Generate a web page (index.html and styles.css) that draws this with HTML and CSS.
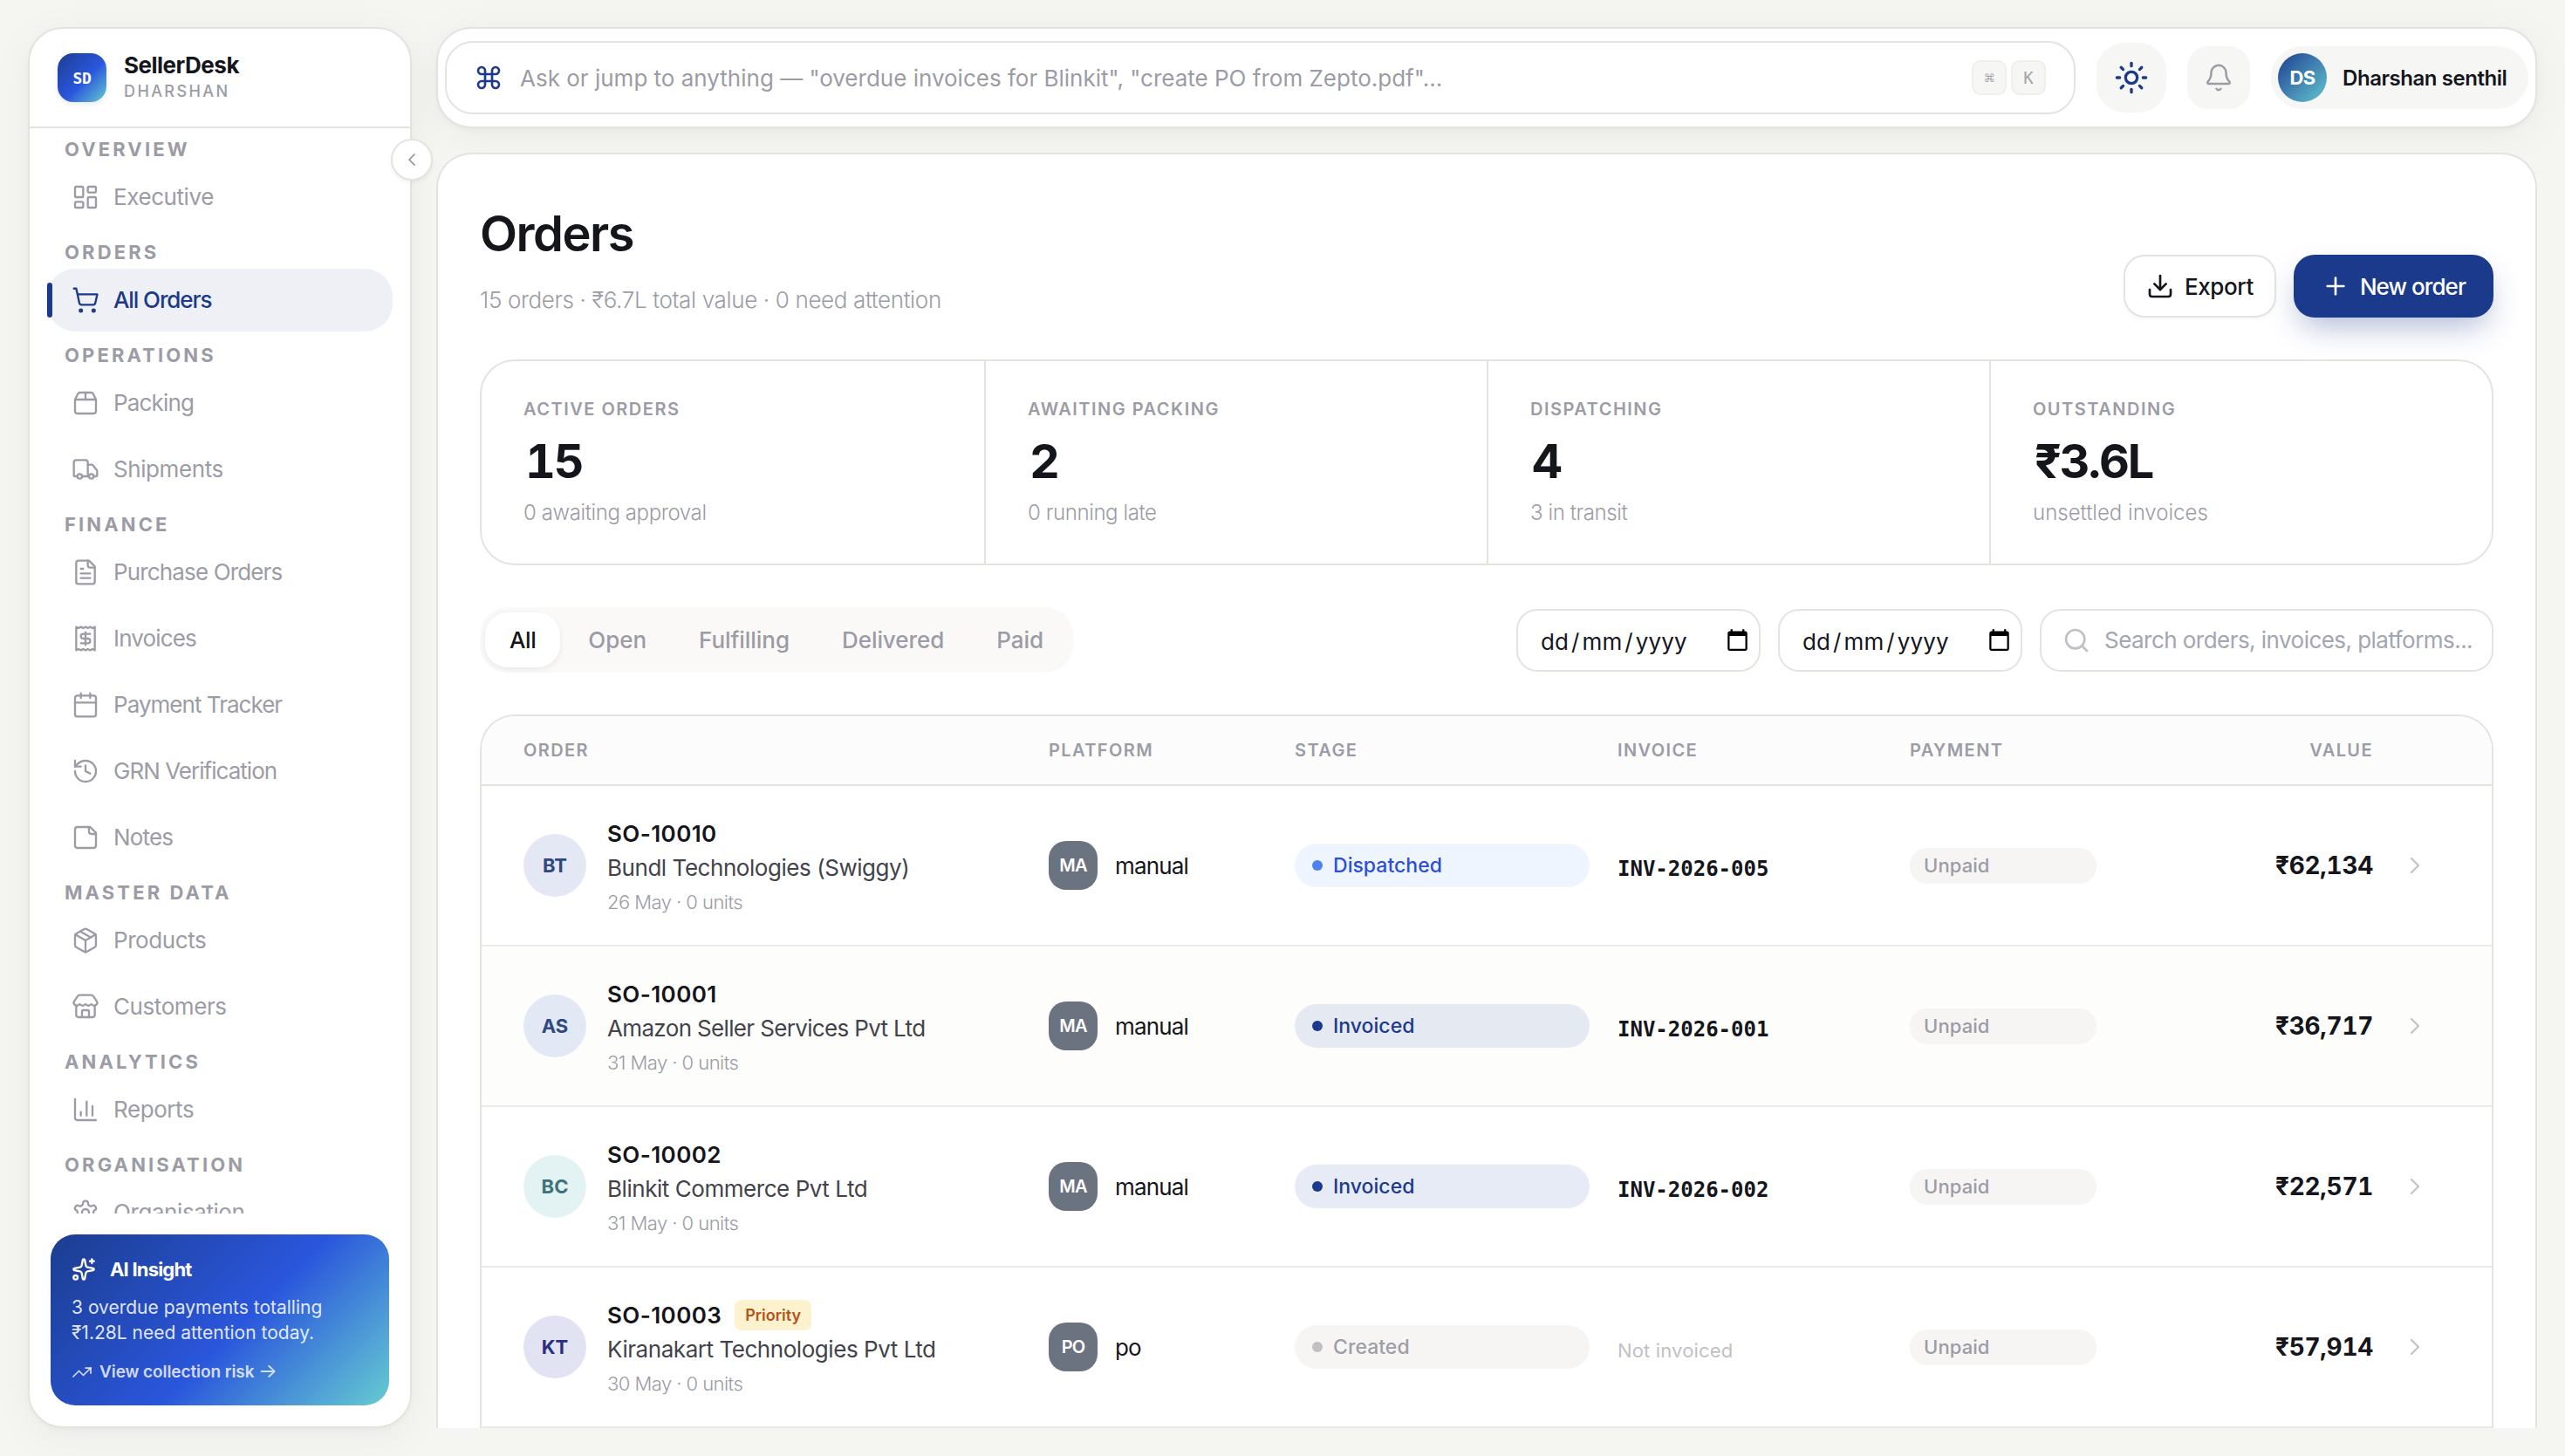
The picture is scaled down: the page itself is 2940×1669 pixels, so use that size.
FILE: index.html
```html
<!DOCTYPE html>
<html lang="en">
<head>
<meta charset="utf-8">
<title>Orders · SellerDesk</title>
<link rel="stylesheet" href="styles.css">
</head>
<body>
<div class="app">
  <aside class="sidebar">
    <header class="brand">
      <div class="brand-logo">SD</div>
      <div>
        <div class="brand-name">SellerDesk</div>
        <div class="brand-org">DHARSHAN</div>
      </div>
    </header>
    <button class="collapse"><svg class="icon" viewBox="0 0 24 24"><path d="m15 18-6-6 6-6"/></svg></button>
    <nav class="nav">
      <section>
        <h2>OVERVIEW</h2>
        <a class="nav-item"><svg class="icon" viewBox="0 0 24 24"><rect width="7" height="9" x="3" y="3" rx="1"/><rect width="7" height="5" x="14" y="3" rx="1"/><rect width="7" height="9" x="14" y="12" rx="1"/><rect width="7" height="5" x="3" y="16" rx="1"/></svg><span class="t-exec">Executive</span></a>
      </section>
      <section>
        <h2>ORDERS</h2>
        <a class="nav-item active"><svg class="icon" viewBox="0 0 24 24"><circle cx="8" cy="21" r="1"/><circle cx="19" cy="21" r="1"/><path d="M2.05 2.05h2l2.66 12.42a2 2 0 0 0 2 1.58h9.78a2 2 0 0 0 1.95-1.57l1.65-7.43H5.12"/></svg><span>All Orders</span></a>
      </section>
      <section>
        <h2>OPERATIONS</h2>
        <a class="nav-item"><svg class="icon" viewBox="0 0 24 24"><path d="M12 3v6"/><path d="M16.76 3a2 2 0 0 1 1.8 1.1l2.23 4.479a2 2 0 0 1 .21.891V19a2 2 0 0 1-2 2H5a2 2 0 0 1-2-2V9.472a2 2 0 0 1 .211-.894L5.45 4.1A2 2 0 0 1 7.24 3z"/><path d="M3.054 9.013h17.893"/></svg><span>Packing</span></a>
        <a class="nav-item"><svg class="icon" viewBox="0 0 24 24"><path d="M14 18V6a2 2 0 0 0-2-2H4a2 2 0 0 0-2 2v11a1 1 0 0 0 1 1h2"/><path d="M15 18H9"/><path d="M19 18h2a1 1 0 0 0 1-1v-3.65a1 1 0 0 0-.22-.624l-3.48-4.35A1 1 0 0 0 17.52 8H14"/><circle cx="17" cy="18" r="2"/><circle cx="7" cy="18" r="2"/></svg><span class="t-exec">Shipments</span></a>
      </section>
      <section>
        <h2>FINANCE</h2>
        <a class="nav-item"><svg class="icon" viewBox="0 0 24 24"><path d="M15 2H6a2 2 0 0 0-2 2v16a2 2 0 0 0 2 2h12a2 2 0 0 0 2-2V7Z"/><path d="M14 2v4a2 2 0 0 0 2 2h4"/><path d="M10 9H8"/><path d="M16 13H8"/><path d="M16 17H8"/></svg><span>Purchase Orders</span></a>
        <a class="nav-item"><svg class="icon" viewBox="0 0 24 24"><path d="M4 2v20l2-1 2 1 2-1 2 1 2-1 2 1 2-1 2 1V2l-2 1-2-1-2 1-2-1-2 1-2-1-2 1Z"/><path d="M16 8h-6a2 2 0 1 0 0 4h4a2 2 0 1 1 0 4H8"/><path d="M12 17.5v-11"/></svg><span>Invoices</span></a>
        <a class="nav-item"><svg class="icon" viewBox="0 0 24 24"><path d="M8 2v4"/><path d="M16 2v4"/><rect width="18" height="18" x="3" y="4" rx="2"/><path d="M3 10h18"/></svg><span class="t-tight">Payment Tracker</span></a>
        <a class="nav-item"><svg class="icon" viewBox="0 0 24 24"><path d="M3 12a9 9 0 1 0 9-9 9.75 9.75 0 0 0-6.74 2.74L3 8"/><path d="M3 3v5h5"/><path d="M12 7v5l4 2"/></svg><span class="t-tight">GRN Verification</span></a>
        <a class="nav-item"><svg class="icon" viewBox="0 0 24 24"><path d="M16 3H5a2 2 0 0 0-2 2v14a2 2 0 0 0 2 2h14a2 2 0 0 0 2-2V8Z"/><path d="M15 3v4a2 2 0 0 0 2 2h4"/></svg><span>Notes</span></a>
      </section>
      <section>
        <h2>MASTER DATA</h2>
        <a class="nav-item"><svg class="icon" viewBox="0 0 24 24"><path d="M11 21.73a2 2 0 0 0 2 0l7-4A2 2 0 0 0 21 16V8a2 2 0 0 0-1-1.73l-7-4a2 2 0 0 0-2 0l-7 4A2 2 0 0 0 3 8v8a2 2 0 0 0 1 1.73z"/><path d="M12 22V12"/><path d="M3.29 7 12 12l8.71-5"/><path d="m7.5 4.27 9 5.15"/></svg><span class="t-exec">Products</span></a>
        <a class="nav-item"><svg class="icon" viewBox="0 0 24 24"><path d="M15 21v-5a1 1 0 0 0-1-1h-4a1 1 0 0 0-1 1v5"/><path d="M17.774 10.31a1.12 1.12 0 0 0-1.549 0 2.5 2.5 0 0 1-3.451 0 1.12 1.12 0 0 0-1.548 0 2.5 2.5 0 0 1-3.452 0 1.12 1.12 0 0 0-1.549 0 2.5 2.5 0 0 1-3.77-3.248l2.889-4.184A2 2 0 0 1 7 2h10a2 2 0 0 1 1.653.873l2.895 4.192a2.5 2.5 0 0 1-3.774 3.244"/><path d="M4 10.95V19a2 2 0 0 0 2 2h12a2 2 0 0 0 2-2v-8.05"/></svg><span class="t-exec">Customers</span></a>
      </section>
      <section>
        <h2>ANALYTICS</h2>
        <a class="nav-item"><svg class="icon" viewBox="0 0 24 24"><path d="M3 3v16a2 2 0 0 0 2 2h16"/><path d="M18 17V9"/><path d="M13 17V5"/><path d="M8 17v-3"/></svg><span class="t-exec">Reports</span></a>
      </section>
      <section>
        <h2>ORGANISATION</h2>
        <a class="nav-item"><svg class="icon" viewBox="0 0 24 24"><path d="M12.22 2h-.44a2 2 0 0 0-2 2v.18a2 2 0 0 1-1 1.73l-.43.25a2 2 0 0 1-2 0l-.15-.08a2 2 0 0 0-2.73.73l-.22.38a2 2 0 0 0 .73 2.73l.15.1a2 2 0 0 1 1 1.72v.51a2 2 0 0 1-1 1.74l-.15.09a2 2 0 0 0-.73 2.73l.22.38a2 2 0 0 0 2.73.73l.15-.08a2 2 0 0 1 2 0l.43.25a2 2 0 0 1 1 1.73V20a2 2 0 0 0 2 2h.44a2 2 0 0 0 2-2v-.18a2 2 0 0 1 1-1.73l.43-.25a2 2 0 0 1 2 0l.15.08a2 2 0 0 0 2.73-.73l.22-.39a2 2 0 0 0-.73-2.73l-.15-.08a2 2 0 0 1-1-1.74v-.5a2 2 0 0 1 1-1.74l.15-.09a2 2 0 0 0 .73-2.73l-.22-.38a2 2 0 0 0-2.73-.73l-.15.08a2 2 0 0 1-2 0l-.43-.25a2 2 0 0 1-1-1.73V4a2 2 0 0 0-2-2z"/><circle cx="12" cy="12" r="3"/></svg><span class="t-exec">Organisation</span></a>
      </section>
    </nav>
    <div class="insight">
      <div class="insight-title"><svg class="icon" viewBox="0 0 24 24"><path d="M11.017 2.814a1 1 0 0 1 1.966 0l1.051 5.558a2 2 0 0 0 1.594 1.594l5.558 1.051a1 1 0 0 1 0 1.966l-5.558 1.051a2 2 0 0 0-1.594 1.594l-1.051 5.558a1 1 0 0 1-1.966 0l-1.051-5.558a2 2 0 0 0-1.594-1.594l-5.558-1.051a1 1 0 0 1 0-1.966l5.558-1.051a2 2 0 0 0 1.594-1.594z"/><path d="M20 2v4"/><path d="M22 4h-4"/><circle cx="4" cy="20" r="2"/></svg><span>AI Insight</span></div>
      <p>3 overdue payments totalling<br>₹1.28L need attention today.</p>
      <a class="insight-link"><svg class="icon" viewBox="0 0 24 24"><path d="M16 7h6v6"/><path d="m22 7-8.5 8.5-5-5L2 17"/></svg><span>View collection risk <span class="arrow">→</span></span></a>
    </div>
  </aside>

  <div class="content">
    <header class="topbar">
      <div class="command">
        <svg class="icon" viewBox="0 0 24 24"><path d="M15 6v12a3 3 0 1 0 3-3H6a3 3 0 1 0 3 3V6a3 3 0 1 0-3 3h12a3 3 0 1 0-3-3"/></svg>
        <span class="command-hint">Ask or jump to anything — "overdue invoices for Blinkit", "create PO from Zepto.pdf"...</span>
        <kbd class="kbd-cmd">⌘</kbd><kbd>K</kbd>
      </div>
      <button class="theme"><svg class="icon" viewBox="0 0 24 24"><circle cx="12" cy="12" r="4"/><path d="M12 2v2"/><path d="M12 20v2"/><path d="m4.93 4.93 1.41 1.41"/><path d="m17.66 17.66 1.41 1.41"/><path d="M2 12h2"/><path d="M20 12h2"/><path d="m6.34 17.66-1.41 1.41"/><path d="m19.07 4.93-1.41 1.41"/></svg></button>
      <button class="bell"><svg class="icon" viewBox="0 0 24 24"><path d="M10.268 21a2 2 0 0 0 3.464 0"/><path d="M3.262 15.326A1 1 0 0 0 4 17h16a1 1 0 0 0 .74-1.673C19.41 13.956 18 12.499 18 8A6 6 0 0 0 6 8c0 4.499-1.411 5.956-2.738 7.326"/></svg></button>
      <div class="profile"><span class="profile-avatar">DS</span><span>Dharshan senthil</span></div>
    </header>

    <main class="panel">
      <div class="page-head">
        <div>
          <h1>Orders</h1>
          <p class="summary">15 orders · ₹6.7L total value · 0 need attention</p>
        </div>
        <div class="actions">
          <button class="btn"><svg class="icon" viewBox="0 0 24 24"><path d="M12 3v12"/><path d="M21 15v4a2 2 0 0 1-2 2H5a2 2 0 0 1-2-2v-4"/><path d="m7 10 5 5 5-5"/></svg><span class="t-export">Export</span></button>
          <button class="btn primary"><svg class="icon" viewBox="0 0 24 24"><path d="M5 12h14"/><path d="M12 5v14"/></svg><span>New order</span></button>
        </div>
      </div>

      <div class="stats">
        <div class="stat"><div class="stat-label">ACTIVE ORDERS</div><div class="stat-value">15</div><div class="stat-note">0 awaiting approval</div></div>
        <div class="stat"><div class="stat-label">AWAITING PACKING</div><div class="stat-value">2</div><div class="stat-note">0 running late</div></div>
        <div class="stat"><div class="stat-label">DISPATCHING</div><div class="stat-value">4</div><div class="stat-note">3 in transit</div></div>
        <div class="stat"><div class="stat-label">OUTSTANDING</div><div class="stat-value">₹3.6L</div><div class="stat-note loose">unsettled invoices</div></div>
      </div>

      <div class="filters">
        <div class="tabs"><span class="tab on">All</span><span class="tab">Open</span><span class="tab">Fulfilling</span><span class="tab">Delivered</span><span class="tab">Paid</span></div>
        <div class="inputs">
          <div class="date"><span class="date-text">dd<i>/</i>mm<i>/</i>yyyy</span><svg class="cal" viewBox="0 0 24 24"><path d="M20 3h-1V1h-2v2H7V1H5v2H4c-1.1 0-2 .9-2 2v16c0 1.1.9 2 2 2h16c1.1 0 2-.9 2-2V5c0-1.1-.9-2-2-2zm0 18H4V8h16v13z"/></svg></div>
          <div class="date"><span class="date-text">dd<i>/</i>mm<i>/</i>yyyy</span><svg class="cal" viewBox="0 0 24 24"><path d="M20 3h-1V1h-2v2H7V1H5v2H4c-1.1 0-2 .9-2 2v16c0 1.1.9 2 2 2h16c1.1 0 2-.9 2-2V5c0-1.1-.9-2-2-2zm0 18H4V8h16v13z"/></svg></div>
          <div class="search"><svg class="icon" viewBox="0 0 24 24"><circle cx="11" cy="11" r="8"/><path d="m21 21-4.34-4.34"/></svg><span>Search orders, invoices, platforms...</span></div>
        </div>
      </div>

      <div class="table">
        <div class="row head"><span>ORDER</span><span>PLATFORM</span><span>STAGE</span><span>INVOICE</span><span>PAYMENT</span><span class="right">VALUE</span><span></span></div>
        <div class="row">
          <div class="order"><span class="avatar av-bt">BT</span><div><div class="order-id">SO-10010</div><div class="customer">Bundl Technologies (Swiggy)</div><div class="meta">26 May · 0 units</div></div></div>
          <div class="platform"><span class="chip">MA</span><span>manual</span></div>
          <div class="stage dispatched"><span class="dot"></span><span>Dispatched</span></div>
          <div class="invoice">INV-2026-005</div>
          <div class="payment">Unpaid</div>
          <div class="value">₹62,134</div>
          <svg class="icon go" viewBox="0 0 24 24"><path d="m9 18 6-6-6-6"/></svg>
        </div>
        <div class="row hover">
          <div class="order"><span class="avatar av-as">AS</span><div><div class="order-id">SO-10001</div><div class="customer snug">Amazon Seller Services Pvt Ltd</div><div class="meta">31 May · 0 units</div></div></div>
          <div class="platform"><span class="chip">MA</span><span>manual</span></div>
          <div class="stage invoiced"><span class="dot"></span><span>Invoiced</span></div>
          <div class="invoice">INV-2026-001</div>
          <div class="payment">Unpaid</div>
          <div class="value">₹36,717</div>
          <svg class="icon go" viewBox="0 0 24 24"><path d="m9 18 6-6-6-6"/></svg>
        </div>
        <div class="row">
          <div class="order"><span class="avatar av-bc">BC</span><div><div class="order-id">SO-10002</div><div class="customer">Blinkit Commerce Pvt Ltd</div><div class="meta">31 May · 0 units</div></div></div>
          <div class="platform"><span class="chip">MA</span><span>manual</span></div>
          <div class="stage invoiced"><span class="dot"></span><span>Invoiced</span></div>
          <div class="invoice">INV-2026-002</div>
          <div class="payment">Unpaid</div>
          <div class="value">₹22,571</div>
          <svg class="icon go" viewBox="0 0 24 24"><path d="m9 18 6-6-6-6"/></svg>
        </div>
        <div class="row">
          <div class="order"><span class="avatar av-kt">KT</span><div><div class="order-id">SO-10003<span class="priority">Priority</span></div><div class="customer">Kiranakart Technologies Pvt Ltd</div><div class="meta">30 May · 0 units</div></div></div>
          <div class="platform"><span class="chip">PO</span><span>po</span></div>
          <div class="stage created"><span class="dot"></span><span>Created</span></div>
          <div class="invoice none">Not invoiced</div>
          <div class="payment">Unpaid</div>
          <div class="value">₹57,914</div>
          <svg class="icon go" viewBox="0 0 24 24"><path d="m9 18 6-6-6-6"/></svg>
        </div>
      </div>
    </main>
  </div>
</div>
</body>
</html>
```

FILE: styles.css
```css
:root {
  --ink: #15161c;
  --muted: #9b9ca5;
  --line: #e4e4df;
  --line-soft: #ebebea;
  --brand: #1c3a8c;
  --soft: #f6f6f4;
}

* { box-sizing: border-box; margin: 0; padding: 0; }

body {
  background: #f5f6f2;
  color: var(--ink);
  font-family: Inter, "Open Sans", sans-serif;
  font-size: 26px;
  overflow: hidden;
}

button { border: 0; font: inherit; color: inherit; background: none; }

.icon {
  display: block;
  flex: none;
  width: 32px;
  height: 32px;
  fill: none;
  stroke: currentColor;
  stroke-width: 1.75;
  stroke-linecap: round;
  stroke-linejoin: round;
}

.app {
  display: flex;
  gap: 28px;
  height: 1669px;
  padding: 31px 32px 32px;
}

/* Sidebar */
.sidebar {
  position: relative;
  display: flex;
  flex-direction: column;
  flex: none;
  width: 440px;
  background: #fff;
  border: 2px solid var(--line);
  border-radius: 40px;
  box-shadow: 0 2px 4px rgba(20, 20, 30, .03), 0 8px 48px rgba(20, 20, 30, .05);
}

.brand {
  display: flex;
  align-items: center;
  flex: none;
  gap: 20px;
  height: 114px;
  padding-left: 32px;
  border-bottom: 2px solid var(--line);
}

.brand-logo {
  display: grid;
  place-items: center;
  width: 56px;
  height: 56px;
  border-radius: 18px;
  background: linear-gradient(135deg, #1c3d8f 0%, #2a56dc 55%, #66ccd2 100%);
  box-shadow: 0 2px 6px rgba(20, 20, 30, .1);
  color: #fff;
  font: 700 18px "DejaVu Sans Mono", monospace;
  letter-spacing: -.3px;
}

.brand-name {
  margin-top: -3px;
  font-weight: 700;
  line-height: 34px;
  letter-spacing: -.5px;
}

.brand-org {
  color: var(--muted);
  font-size: 18px;
  font-weight: 500;
  line-height: 26px;
  letter-spacing: 2.4px;
}

.collapse {
  position: absolute;
  top: 126px;
  right: -26px;
  z-index: 2;
  display: grid;
  place-items: center;
  width: 48px;
  height: 48px;
  border: 2px solid var(--line);
  border-radius: 50%;
  background: #fff;
  box-shadow: 0 2px 4px rgba(20, 20, 30, .06);
  color: #8f9098;
}

.collapse .icon { width: 24px; height: 24px; }

.nav {
  flex: 1;
  min-height: 0;
  overflow: hidden;
  padding: 0 20px;
}

.nav section:first-child { margin-top: -3px; }

.nav h2 {
  height: 46px;
  padding: 8px 0 0 20px;
  color: var(--muted);
  font-size: 22px;
  font-weight: 700;
  line-height: 38px;
  letter-spacing: 3.12px;
}

.nav-item {
  position: relative;
  display: flex;
  align-items: center;
  gap: 16px;
  height: 72px;
  padding: 0 0 1px 28px;
  border-radius: 32px;
  color: var(--muted);
  letter-spacing: -.85px;
}

.nav-item + .nav-item { margin-top: 4px; }
.nav-item .t-exec { letter-spacing: -.42px; }
.nav-item .t-tight { letter-spacing: -.97px; }

.nav-item.active {
  background: #eff0f6;
  color: var(--brand);
  font-weight: 500;
  letter-spacing: -1.1px;
}

.nav-item.active::before {
  content: "";
  position: absolute;
  left: 0;
  top: 16px;
  width: 6px;
  height: 40px;
  border-radius: 3px;
  background: var(--brand);
}

.insight {
  flex: none;
  height: 196px;
  margin: 24px;
  padding: 24px;
  border-radius: 28px;
  background: linear-gradient(135deg, #1c3d8f 0%, #2a56dc 55%, #66ccd2 100%);
  color: #fff;
}

.insight-title {
  display: flex;
  align-items: center;
  gap: 16px;
  font-size: 22px;
  font-weight: 700;
  line-height: 32px;
  letter-spacing: -.8px;
}

.insight-title .icon { width: 28px; height: 28px; stroke-width: 2; }

.insight p {
  margin-top: 13px;
  color: rgba(255, 255, 255, .87);
  font-size: 21px;
  line-height: 29px;
  letter-spacing: 0;
}

.insight-link {
  display: flex;
  align-items: center;
  gap: 8px;
  margin-top: 18px;
  color: rgba(255, 255, 255, .8);
  font-size: 19px;
  font-weight: 600;
  line-height: 26px;
  letter-spacing: -.08px;
}

.insight-link .arrow { font-size: 23px; font-weight: 400; line-height: 20px; }
.insight-link .icon { width: 24px; height: 24px; }

/* Right column */
.content {
  display: flex;
  flex-direction: column;
  flex: 1;
  min-width: 0;
}

.topbar {
  display: flex;
  align-items: center;
  flex: none;
  gap: 24px;
  height: 116px;
  padding: 0 8px;
  background: #fff;
  border: 2px solid var(--line);
  border-radius: 40px;
  box-shadow: 0 2px 4px rgba(20, 20, 30, .03), 0 8px 48px rgba(20, 20, 30, .05);
}

.command {
  display: flex;
  align-items: center;
  flex: 1;
  height: 84px;
  padding: 0 32px;
  border: 2px solid var(--line);
  border-radius: 32px;
}

.command .icon { color: var(--brand); stroke-width: 2; }

.command-hint {
  flex: 1;
  margin-left: 20px;
  color: var(--muted);
  white-space: nowrap;
}

kbd {
  display: grid;
  place-items: center;
  width: 40px;
  height: 40px;
  margin-left: 5px;
  border: 2px solid #efefec;
  border-radius: 10px;
  background: var(--soft);
  color: #a3a4ab;
  font: 19px "DejaVu Sans Mono", monospace;
}

.kbd-cmd { font: 13px "DejaVu Sans", sans-serif; }

.theme {
  display: grid;
  place-items: center;
  width: 80px;
  height: 80px;
  border-radius: 32px;
  background: var(--soft);
  color: var(--brand);
}

.theme .icon { width: 40px; height: 40px; stroke-width: 2; }

.bell {
  display: grid;
  place-items: center;
  width: 72px;
  height: 72px;
  border-radius: 24px;
  background: var(--soft);
  color: var(--muted);
}

.bell .icon { width: 34px; height: 34px; }

.profile {
  display: flex;
  align-items: center;
  gap: 18px;
  width: 295px;
  height: 72px;
  padding-left: 8px;
  border-radius: 36px;
  background: var(--soft);
  font-size: 24px;
  font-weight: 600;
  letter-spacing: -.45px;
  white-space: nowrap;
}

.profile-avatar {
  display: grid;
  place-items: center;
  width: 56px;
  height: 56px;
  border-radius: 50%;
  background: linear-gradient(135deg, #1f3f92, #62c6cf);
  color: #fff;
  font-size: 22px;
  font-weight: 700;
  letter-spacing: -.6px;
}

.panel {
  flex: 1;
  min-height: 0;
  margin-top: 28px;
  padding: 55px 48px 0;
  overflow: hidden;
  background: #fff;
  border: 2px solid var(--line);
  border-bottom: 0;
  border-radius: 40px 40px 0 0;
}

.page-head {
  display: flex;
  align-items: flex-end;
  justify-content: space-between;
}

h1 {
  font-size: 56px;
  font-weight: 600;
  line-height: 72px;
  letter-spacing: -1.5px;
}

.summary {
  margin-top: 20px;
  color: var(--muted);
  font-weight: 300;
  line-height: 40px;
  letter-spacing: -.35px;
}

.actions { display: flex; gap: 20px; }

.btn {
  display: flex;
  align-items: center;
  gap: 12px;
  height: 72px;
  padding: 0 24px;
  border: 2px solid var(--line);
  border-radius: 24px;
  background: #fff;
  box-shadow: 0 2px 4px rgba(20, 20, 30, .04);
  font-weight: 500;
}

.btn .icon { stroke-width: 2; }
.t-export { letter-spacing: -.4px; }

.btn.primary {
  padding: 0 32px;
  border: 0;
  background: var(--brand);
  box-shadow: 0 16px 36px -8px rgba(28, 58, 140, .38);
  color: #fff;
  letter-spacing: -.95px;
}

.stats {
  display: grid;
  grid-template-columns: repeat(4, 1fr);
  height: 236px;
  margin-top: 48px;
  border: 2px solid var(--line);
  border-radius: 40px;
}

.stat { padding: 41px 48px 0; }
.stat + .stat { border-left: 2px solid var(--line); }

.stat-label {
  color: var(--muted);
  font-size: 20px;
  font-weight: 600;
  line-height: 28px;
  letter-spacing: 1.5px;
}

.stat-value {
  margin-top: 14px;
  padding-left: 2px;
  font-size: 54px;
  font-weight: 700;
  font-variant-numeric: tabular-nums;
  line-height: 64px;
  letter-spacing: -2.1px;
}

.stat-note {
  margin-top: 11px;
  color: var(--muted);
  font-size: 24px;
  font-weight: 300;
  line-height: 32px;
  letter-spacing: -.4px;
}

.stat-note.loose { letter-spacing: 0; }

.filters {
  display: flex;
  align-items: center;
  justify-content: space-between;
  margin-top: 48px;
}

.tabs {
  display: flex;
  gap: 4px;
  height: 75px;
  padding: 6px;
  border-radius: 32px;
  background: #faf9f8;
}

.tab {
  padding: 0 28px;
  border-radius: 26px;
  color: var(--muted);
  font-weight: 500;
  line-height: 63px;
  letter-spacing: -.06px;
}

.tab.on {
  background: #fff;
  box-shadow: 0 2px 6px rgba(20, 20, 30, .08);
  color: var(--ink);
  letter-spacing: -.4px;
}

.inputs { display: flex; gap: 20px; }

.date,
.search {
  display: flex;
  align-items: center;
  height: 72px;
  border: 2px solid var(--line);
  border-radius: 24px;
  background: #fff;
}

.date {
  justify-content: space-between;
  width: 280px;
  padding: 0 11px 0 26px;
}

.date-text { padding-top: 3px; letter-spacing: .1px; }
.date-text i { padding: 0 3px; font-style: normal; }
.cal { width: 27px; height: 27px; fill: #000; }

.search {
  gap: 16px;
  width: 520px;
  padding-left: 24px;
  color: #a2a6b1;
  letter-spacing: -.54px;
  white-space: nowrap;
}

.search .icon { color: #c0c1c6; stroke-width: 2; }

/* Orders table */
.table {
  margin-top: 48px;
  border: 2px solid var(--line);
  border-bottom: 0;
  border-radius: 40px 40px 0 0;
  overflow: hidden;
}

.row {
  display: grid;
  grid-template-columns: 570px 250px 338px 303px 214px 285px 56px;
  column-gap: 32px;
  align-items: center;
  height: 184px;
  padding: 0 48px;
  border-bottom: 2px solid var(--line-soft);
}

.row.head {
  height: 80px;
  border-bottom-color: var(--line);
  background: #fcfcfc;
  color: var(--muted);
  font-size: 20px;
  font-weight: 600;
  letter-spacing: 1.4px;
}

.row.hover { background: #fdfdfb; }
.right { text-align: right; }

.order { display: flex; align-items: center; gap: 24px; }

.avatar {
  display: grid;
  place-items: center;
  width: 72px;
  height: 72px;
  border-radius: 50%;
  font-size: 22px;
  font-weight: 700;
}

.av-bt { background: #e3e8f4; color: #304780; }
.av-as { background: #e2e9f4; color: #2f4a7c; }
.av-bc { background: #e3f2f3; color: #3d737b; }
.av-kt { background: #e1e2f2; color: #2b2f7c; }

.order-id {
  display: flex;
  align-items: center;
  margin-top: 5px;
  font-weight: 600;
  line-height: 39px;
  letter-spacing: .4px;
}

.customer {
  color: #42434a;
  line-height: 39px;
  letter-spacing: -.45px;
}

.customer.snug { letter-spacing: -.65px; }

.meta {
  color: var(--muted);
  font-size: 22px;
  font-weight: 300;
  line-height: 40px;
  letter-spacing: -.55px;
}

.priority {
  height: 35px;
  margin-left: 15px;
  padding: 0 12px;
  border-radius: 8px;
  background: #fcf2cd;
  color: #b4541a;
  font-size: 18px;
  line-height: 35px;
  letter-spacing: 0;
}

.platform {
  display: flex;
  align-items: center;
  gap: 20px;
  letter-spacing: -.84px;
}

.chip {
  display: grid;
  place-items: center;
  width: 56px;
  height: 56px;
  border-radius: 20px;
  background: #6b7280;
  color: #fff;
  font-size: 20px;
  font-weight: 600;
}

.stage {
  display: flex;
  align-items: center;
  gap: 12px;
  height: 50px;
  padding-left: 20px;
  border-radius: 25px;
  font-size: 23px;
  font-weight: 500;
  letter-spacing: .03px;
}

.dot { width: 12px; height: 12px; border-radius: 50%; background: currentColor; }

.dispatched { background: #eff5fe; color: #2b4fd6; }
.dispatched .dot { background: #4d83f0; }
.invoiced { background: #e7ebf5; color: var(--brand); }
.hover .invoiced { background: #e5e9f1; }
.created { background: #f6f5f4; color: #9d9ea6; }
.created .dot { background: #c1c1c4; }

.invoice {
  padding-top: 7px;
  font: 700 24px "DejaVu Sans Mono", monospace;
  letter-spacing: 0;
}

.invoice.none {
  color: #c0c1c6;
  font: 400 22px Inter, sans-serif;
  letter-spacing: .15px;
}

.payment {
  height: 41px;
  padding-left: 16px;
  border-radius: 20px;
  background: #f6f5f3;
  color: var(--muted);
  font-size: 22px;
  font-weight: 500;
  line-height: 41px;
  letter-spacing: .1px;
}

.value {
  font-size: 28px;
  font-weight: 700;
  font-variant-numeric: tabular-nums;
  letter-spacing: -.3px;
  text-align: right;
}

.go { justify-self: start; color: #c4c5cb; }
```
